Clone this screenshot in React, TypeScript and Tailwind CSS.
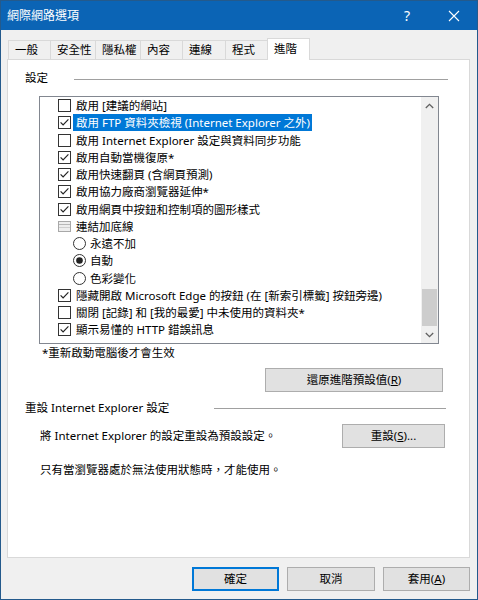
import React from "react";

const F = "font-['Noto_Sans','Noto_Sans_CJK_TC',sans-serif]";

function Check({ checked }: { checked: boolean }) {
  return (
    <svg width="13" height="13" viewBox="0 0 13 13" className="shrink-0">
      <rect x="0.5" y="0.5" width="12" height="12" fill="#fff" stroke="#333" />
      {checked && (
        <path d="M2.6 6.4 L5.1 9 L10.4 3.4" fill="none" stroke="#222" strokeWidth="1.15" />
      )}
    </svg>
  );
}

function Radio({ on }: { on: boolean }) {
  return (
    <svg width="13" height="13" viewBox="0 0 13 13" className="shrink-0">
      <circle cx="6.5" cy="6.5" r="6" fill="#fff" stroke="#333" />
      {on && <circle cx="6.5" cy="6.5" r="3.3" fill="#222" />}
    </svg>
  );
}

function GroupIcon() {
  return (
    <svg width="13" height="11" viewBox="0 0 13 11" className="shrink-0">
      <rect x="0.5" y="0.5" width="12" height="10" fill="#eeeeee" stroke="#a8a8a8" />
      <line x1="1" y1="3.5" x2="12" y2="3.5" stroke="#b8b8b8" />
      <line x1="1" y1="6.5" x2="12" y2="6.5" stroke="#cfcfcf" />
    </svg>
  );
}

type Row =
  | { kind: "check"; text: string; checked: boolean; sel?: boolean }
  | { kind: "group"; text: string }
  | { kind: "radio"; text: string; on: boolean };

const rows: Row[] = [
  { kind: "check", text: "啟用 [建議的網站]", checked: false },
  { kind: "check", text: "啟用 FTP 資料夾檢視 (Internet Explorer 之外)", checked: true, sel: true },
  { kind: "check", text: "啟用 Internet Explorer 設定與資料同步功能", checked: false },
  { kind: "check", text: "啟用自動當機復原*", checked: true },
  { kind: "check", text: "啟用快速翻頁 (含網頁預測)", checked: true },
  { kind: "check", text: "啟用協力廠商瀏覽器延伸*", checked: true },
  { kind: "check", text: "啟用網頁中按鈕和控制項的圖形樣式", checked: true },
  { kind: "group", text: "連結加底線" },
  { kind: "radio", text: "永遠不加", on: false },
  { kind: "radio", text: "自動", on: true },
  { kind: "radio", text: "色彩變化", on: false },
  { kind: "check", text: "隱藏開啟 Microsoft Edge 的按鈕 (在 [新索引標籤] 按鈕旁邊)", checked: true },
  { kind: "check", text: "關閉 [記錄] 和 [我的最愛] 中未使用的資料夾*", checked: false },
  { kind: "check", text: "顯示易懂的 HTTP 錯誤訊息", checked: true },
];

function ListRow({ r }: { r: Row }) {
  if (r.kind === "radio") {
    return (
      <div className="h-[17.25px] flex items-center pl-[33px]">
        <Radio on={r.on} />
        <span className="ml-[4px] whitespace-nowrap">{r.text}</span>
      </div>
    );
  }
  if (r.kind === "group") {
    return (
      <div className="h-[17.25px] flex items-center pl-[18px]">
        <GroupIcon />
        <span className="ml-[5px] whitespace-nowrap">{r.text}</span>
      </div>
    );
  }
  return (
    <div className="h-[17.25px] flex items-center pl-[18px]">
      <Check checked={r.checked} />
      <span
        className={
          "ml-[2px] pl-[3px] pr-[2px] whitespace-nowrap h-[17px] flex items-center " +
          (r.sel ? "bg-[#0078d7] text-white" : "")
        }
      >
        {r.text}
      </span>
    </div>
  );
}

function Btn({ children, className = "", focus = false }: { children: React.ReactNode; className?: string; focus?: boolean }) {
  return (
    <div
      className={
        "h-[24px] flex items-center justify-center bg-[#e1e1e1] border " +
        (focus ? "border-[#0078d7] shadow-[inset_0_0_0_1px_#0078d7]" : "border-[#adadad]") +
        " " +
        className
      }
    >
      {children}
    </div>
  );
}

export default function App() {
  const tabs = ["一般", "安全性", "隱私權", "內容", "連線", "程式", "進階"];
  const widths = [42, 45, 45, 42, 43, 42, 43];
  return (
    <div className={"w-[478px] h-[600px] flex flex-col bg-[#f0f0f0] border border-[#245a8c] text-[11.5px] text-black " + F}>
      {/* title bar */}
      <div className="h-[29px] bg-[#0b64b5] flex items-center text-white shrink-0">
        <span className="ml-[6px] text-[12px]">網際網路選項</span>
        <span className="ml-auto text-[14px] mr-[38px]">?</span>
        <svg width="12" height="12" viewBox="0 0 12 12" className="mr-[17px]">
          <path d="M1 1 L11 11 M11 1 L1 11" stroke="#fff" strokeWidth="1.1" />
        </svg>
      </div>

      <div className="flex-1 flex flex-col pl-[6px] pr-[7px]">
        {/* tabs */}
        <div className="h-[29px] flex items-end pl-[1px] shrink-0">
          {tabs.map((t, i) => {
            const sel = i === 6;
            return (
              <div
                key={t}
                style={{ width: widths[i] }}
                className={
                  "flex items-center pl-[6px] border-t border-l border-[#d9d9d9] " +
                  (i === 5 ? "" : "") +
                  (sel
                    ? "h-[22px] bg-white border-r relative z-10 -mb-px pb-[2px]"
                    : "h-[19px] bg-[#f0f0f0] " + (i === 6 - 1 ? "" : ""))
                }
              >
                {t}
              </div>
            );
          })}
        </div>

        {/* panel */}
        <div className="h-[499px] bg-white border border-[#d9d9d9] flex flex-col shrink-0">
          <div className="mt-[11px] h-[14px] flex items-center pl-[17px] pr-[21px]">
            <span>設定</span>
            <div className="ml-[26px] flex-1 h-px bg-[#a0a0a0] mt-[2px]" />
          </div>

          {/* listbox */}
          <div className="mt-[11px] ml-[31px] w-[400px] h-[248px] border border-[#828790] flex shrink-0">
            <div className="flex-1 flex flex-col overflow-hidden">
              {rows.map((r, i) => (
                <ListRow key={i} r={r} />
              ))}
            </div>
            <div className="w-[17px] bg-[#f0f0f0] flex flex-col">
              <div className="h-[17px] flex items-center justify-center">
                <svg width="9" height="6" viewBox="0 0 9 6">
                  <path d="M0.8 5 L4.5 1.3 L8.2 5" fill="none" stroke="#606060" strokeWidth="1.3" />
                </svg>
              </div>
              <div className="flex-1" />
              <div className="h-[37px] mx-[1px] bg-[#cdcdcd]" />
              <div className="h-[17px] flex items-center justify-center">
                <svg width="9" height="6" viewBox="0 0 9 6">
                  <path d="M0.8 1 L4.5 4.7 L8.2 1" fill="none" stroke="#606060" strokeWidth="1.3" />
                </svg>
              </div>
            </div>
          </div>

          <div className="mt-[2px] ml-[34px] h-[14px] flex items-center">*重新啟動電腦後才會生效</div>

          <Btn className="mt-[8px] ml-[257px] w-[178px] h-[23px]">
            <span>
              還原進階預設值(<span className="underline">R</span>)
            </span>
          </Btn>

          <div className="mt-[9px] h-[14px] flex items-center pl-[17px] pr-[23px]">
            <span className="whitespace-nowrap">重設 Internet Explorer 設定</span>
            <div className="ml-auto w-[232px] h-px bg-[#a0a0a0]" />
          </div>

          <div className="mt-[9px] h-[24px] flex items-center pl-[32px] pr-[24px]">
            <span className="whitespace-nowrap">將 Internet Explorer 的設定重設為預設設定。</span>
            <Btn className="ml-auto w-[103px]">
              <span>
                重設(<span className="underline">S</span>)...
              </span>
            </Btn>
          </div>

          <div className="mt-[15px] ml-[32px] h-[14px] flex items-center">只有當瀏覽器處於無法使用狀態時，才能使用。</div>
        </div>

        {/* bottom buttons */}
        <div className="mt-[9px] flex justify-end gap-[8px]">
          <Btn focus className="w-[87px]">確定</Btn>
          <Btn className="w-[88px]">取消</Btn>
          <Btn className="w-[87px]">
            <span>
              套用(<span className="underline">A</span>)
            </span>
          </Btn>
        </div>
      </div>
    </div>
  );
}
